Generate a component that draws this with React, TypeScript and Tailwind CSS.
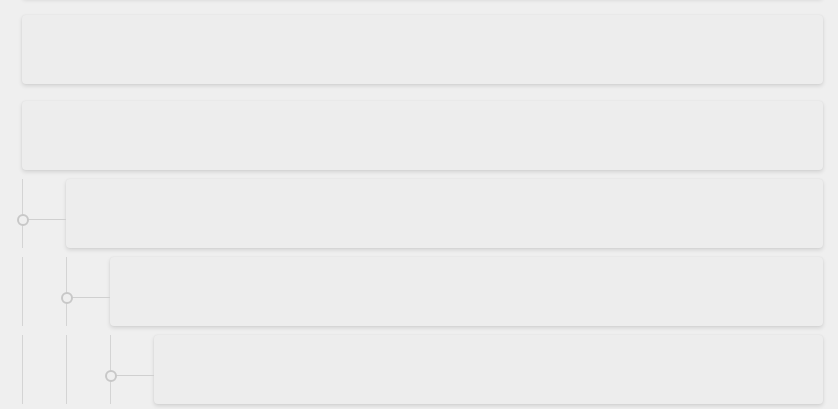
import React from "react";

type Row = { id: number; depth: number };

const TOP_ROWS: Row[] = [
  { id: 1, depth: 0 },
  { id: 2, depth: 0 },
  { id: 3, depth: 0 },
];

const TREE_ROWS: Row[] = [
  { id: 4, depth: 1 },
  { id: 5, depth: 2 },
  { id: 6, depth: 3 },
];

const SkeletonCard = () => (
  <div className="h-[69px] w-full rounded-[4px] bg-[#ededed] shadow-[0_2px_4px_rgba(0,0,0,0.12),0_0_2px_rgba(0,0,0,0.06)]" />
);

const TreeRow = ({ depth }: { depth: number }) => {
  const guides = Array.from({ length: depth }, (_, i) => i);

  return (
    <div className="flex">
      {guides.map((i) => (
        <div key={i} className="relative w-[44px] shrink-0">
          <div className="absolute inset-y-0 left-0 w-px bg-[#d4d4d4]" />
          {i === depth - 1 && (
            <>
              <div className="absolute left-0 right-0 top-[40px] h-px bg-[#d0d0d0]" />
              <div className="absolute left-[-5px] top-[35px] h-[12px] w-[12px] rounded-full border-2 border-[#c8c8c8] bg-[#efefef]" />
            </>
          )}
        </div>
      ))}
      <div className="min-w-0 flex-1">
        <SkeletonCard />
      </div>
    </div>
  );
};

export default function App() {
  return (
    <div className="h-[409px] w-[838px] overflow-hidden bg-[#efefef]">
      <div className="flex flex-col pl-[22px] pr-[15px]">
        <div className="-mt-[71px] flex flex-col gap-[17px]">
          {TOP_ROWS.map((row) => (
            <SkeletonCard key={row.id} />
          ))}
        </div>
        <div className="mt-[9px] flex flex-col gap-[9px]">
          {TREE_ROWS.map((row) => (
            <TreeRow key={row.id} depth={row.depth} />
          ))}
        </div>
      </div>
    </div>
  );
}
